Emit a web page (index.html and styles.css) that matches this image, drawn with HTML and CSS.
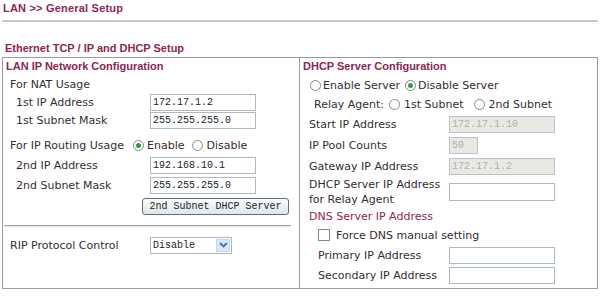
FILE: index.html
```html
<!doctype html>
<html>

<head>
   <meta charset="utf-8">
   <title>LAN General Setup</title>
   <link rel="stylesheet" href="styles.css">
</head>

<body>
   <h1 class="title">LAN &gt;&gt; General Setup</h1>
   <div class="rule"></div>
   <h2 class="section">Ethernet TCP / IP and DHCP Setup</h2>

   <div class="setup">
      <!-- left: LAN IP -->
      <div class="panel lan">
         <div class="head">LAN IP Network Configuration</div>
         <div class="row nat">For NAT Usage</div>
         <div class="row ip1"><span class="label sub">1st IP Address</span><input class="field" value="172.17.1.2"></div>
         <div class="row mask1"><span class="label sub">1st Subnet Mask</span><input class="field" value="255.255.255.0"></div>
         <div class="row routing">
            <span>For IP Routing Usage</span>
            <span class="radio on"></span><span class="opt">Enable</span>
            <span class="radio"></span><span class="opt">Disable</span>
         </div>
         <div class="row ip2"><span class="label sub">2nd IP Address</span><input class="field" value="192.168.10.1"></div>
         <div class="row mask2"><span class="label sub">2nd Subnet Mask</span><input class="field" value="255.255.255.0"></div>
         <div class="row btnrow"><button class="btn">2nd Subnet DHCP Server</button></div>
         <div class="sep"><hr></div>
         <div class="row rip">
            <span class="label">RIP Protocol Control</span>
            <span class="select">Disable<span class="arrow"><svg width="9" height="6" viewBox="0 0 9 6"><path d="M1 1 L4.5 4.5 L8 1" fill="none" stroke="#3d6fb5" stroke-width="1.8"/></svg></span></span>
         </div>
      </div>

      <!-- right: DHCP -->
      <div class="panel dhcp">
         <div class="head">DHCP Server Configuration</div>
         <div class="row enable">
            <span class="radio"></span><span class="opt">Enable Server</span>
            <span class="radio on"></span><span class="opt">Disable Server</span>
         </div>
         <div class="row relay">
            <span>Relay Agent:</span>
            <span class="radio"></span><span class="opt">1st Subnet</span>
            <span class="radio"></span><span class="opt">2nd Subnet</span>
         </div>
         <div class="row start"><span class="label">Start IP Address</span><input class="field off" value="172.17.1.10" disabled></div>
         <div class="row pool"><span class="label">IP Pool Counts</span><input class="field off small" value="50" disabled></div>
         <div class="row gateway"><span class="label">Gateway IP Address</span><input class="field off" value="172.17.1.2" disabled></div>
         <div class="row relayip"><span class="label twoline">DHCP Server IP Address<br>for Relay Agent</span><input class="field tall" value=""></div>
         <div class="row dns">DNS Server IP Address</div>
         <div class="row force"><span class="check"></span><span>Force DNS manual setting</span></div>
         <div class="row primary"><span class="label sub">Primary IP Address</span><input class="field" value=""></div>
         <div class="row secondary"><span class="label sub">Secondary IP Address</span><input class="field" value=""></div>
      </div>
   </div>
</body>

</html>
```

FILE: styles.css
```css
html,
body {
   margin: 0;
   padding: 0;
   background: #fff;
}

body {
   font-family: "DejaVu Sans", Verdana, sans-serif;
   font-size: 11px;
   color: #352c32;
}

.title,
.section,
.head {
   font-family: "Liberation Sans", Arial, sans-serif;
   font-weight: bold;
   font-size: 11px;
   line-height: 16px;
   color: #8c2656;
   margin: 0;
}

.title {
   padding-left: 3px;
   letter-spacing: 0.2px;
}

.rule {
   margin: 4px 2px 0 2px;
   height: 2px;
   background: #c8c8c8;
}

.section {
   margin-top: 18px;
   padding-left: 5px;
}

.setup {
   display: flex;
   width: 596px;
   height: 232px;
   margin: 1px 0 0 2px;
   border: 1px solid #9c9c9c;
   box-sizing: border-box;
}

.panel {
   display: flex;
   flex-direction: column;
}

.lan {
   width: 297px;
   border-right: 1px solid #9c9c9c;
   box-sizing: border-box;
}

.dhcp {
   flex: 1;
}

.head {
   height: 17px;
   line-height: 17px;
   padding-left: 3px;
}

.row {
   display: flex;
   align-items: center;
   white-space: nowrap;
}

.lan .row {
   padding-left: 7px;
}

.dhcp .row {
   padding-left: 9px;
}

.label {
   width: 140px;
   flex-shrink: 0;
}

.label.sub {
   box-sizing: border-box;
   padding-left: 6px;
}

.dhcp .label.sub {
   padding-left: 9px;
}

.twoline {
   line-height: 15px;
}

/* row heights */
.nat { height: 18px; }
.ip1 { height: 18px; }
.mask1 { height: 18px; }
.routing { height: 20px; padding-top: 6px; }
.ip2 { height: 20px; }
.mask2 { height: 20px; }
.btnrow { height: 22px; justify-content: flex-end; padding-right: 10px; }
.rip { height: 20px; }

.enable { height: 20px; }
.relay { height: 19px; }
.start { height: 20px; }
.pool { height: 22px; }
.gateway { height: 20px; }
.relayip { height: 32px; }
.dns { height: 17px; color: #8c2656; }
.force { height: 20px; }
.primary { height: 20px; }
.secondary { height: 20px; }

.dhcp .enable { padding-left: 10px; }
.dhcp .relay { padding-left: 14px; }
.dhcp .force { padding-left: 18px; }

.field {
   width: 106px;
   height: 17px;
   box-sizing: border-box;
   margin: 0;
   padding: 0 2px;
   border: 1px solid #a9b9c8;
   background: #fff;
   font-family: "Liberation Mono", monospace;
   font-size: 10px;
   color: #222;
   outline: none;
}

.field.off {
   background: #e9e9e4;
   color: #b0b0a8;
   border-color: #b9c3cc;
}

.field.small {
   width: 29px;
}

.field.tall {
   height: 18px;
}

.radio {
   width: 9px;
   height: 9px;
   border: 1px solid #7d8b98;
   border-radius: 50%;
   background: #fff;
   position: relative;
   flex-shrink: 0;
   margin: 0 3px 0 8px;
}

.radio.on::after {
   content: "";
   position: absolute;
   left: 2px;
   top: 2px;
   width: 5px;
   height: 5px;
   border-radius: 50%;
   background: #3a9a3a;
}

.routing .radio:nth-child(2) {
   margin-left: 9px;
}

.enable .radio {
   margin: 0 2px 0 5px;
}

.enable .radio:first-child {
   margin-left: 0;
}

.relay .radio {
   margin: 0 4px 0 10px;
}

.relay .radio:nth-child(2) {
   margin-left: 5px;
}

.check {
   width: 10px;
   height: 10px;
   border: 1px solid #7d8b98;
   background: #fff;
   margin-right: 6px;
   flex-shrink: 0;
}

.btn {
   height: 17px;
   width: 147px;
   padding: 0;
   border: 1px solid #5f6e7c;
   border-radius: 3px;
   background: linear-gradient(#fbfcfd, #dfe5ea);
   font-family: "Liberation Mono", monospace;
   font-size: 10px;
   color: #222;
}

.sep {
   height: 18px;
   display: flex;
   align-items: center;
}

.sep hr {
   width: 100%;
   margin: 0 8px 0 1px;
   border: none;
   border-top: 1px solid #a6a6a6;
   border-bottom: 1px solid #e2e2e2;
}

.select {
   display: flex;
   align-items: center;
   justify-content: space-between;
   width: 82px;
   height: 17px;
   box-sizing: border-box;
   border: 1px solid #a9b9c8;
   padding-left: 2px;
   font-family: "Liberation Mono", monospace;
   font-size: 10px;
   color: #222;
}

.select .arrow {
   display: flex;
   align-items: center;
   justify-content: center;
   width: 14px;
   height: 13px;
   margin-right: 1px;
   background: #dce7f5;
   border: 1px solid #c5d5ea;
   box-sizing: border-box;
}
```
